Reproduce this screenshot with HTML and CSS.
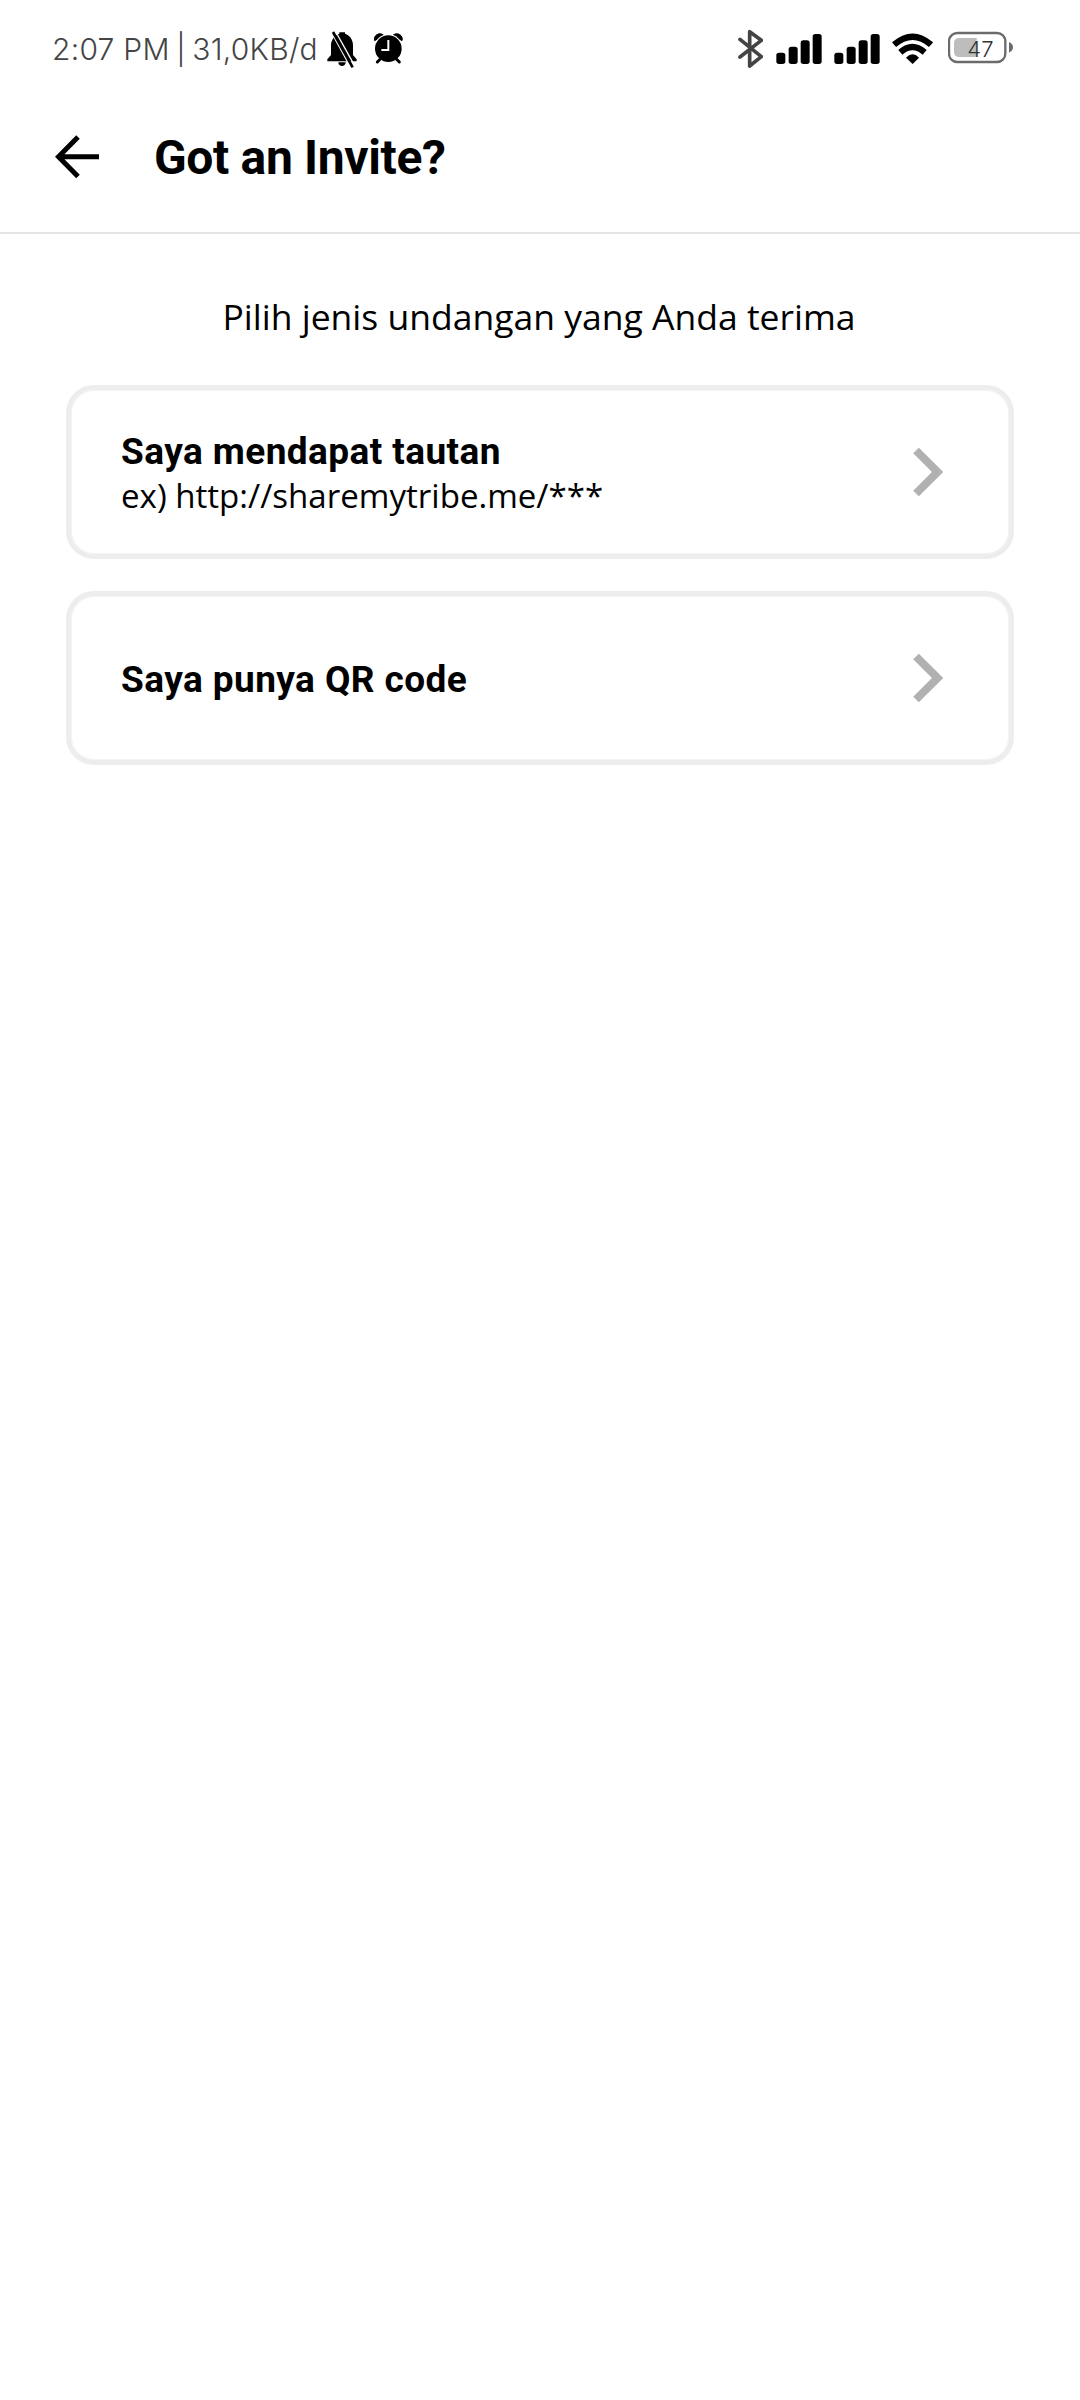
FILE: index.html
```html
<!DOCTYPE html>
<html lang="id">
<head>
<meta charset="utf-8">
<title>Got an Invite?</title>
<link rel="stylesheet" href="styles.css">
</head>
<body>
<div class="status-bar">
  <div class="status-left">
    <span class="status-text">2:07 PM<span class="separator"> | </span>31,0KB/d</span>
    <svg class="bell" viewBox="860 0 90 180">
      <path d="M861 124v-6l11-13V76c0-17 11-30 25-35v-4h17v4c15 5 24 18 24 35v29l11 13v6zM894 127h22c0 15-22 15-22 0z"/>
      <path d="M871 31l64 117" stroke="#fff" stroke-width="6"/>
      <path d="M878 36l59 106" stroke="#000" stroke-width="8"/>
      <path d="M885 33l59 106" stroke="#fff" stroke-width="4"/>
    </svg>
    <svg class="alarm" viewBox="1000 0 87 180">
      <path d="M1002 62c-5-15 14-28 27-16zM1084 62c5-15-14-28-27-16z" stroke="#000" stroke-width="3"/>
      <circle cx="1043" cy="86" r="43" fill="#fff"/>
      <circle cx="1043" cy="86" r="40"/>
      <path d="M1019 117l-9 9M1067 117l9 9" stroke="#000" stroke-width="9" stroke-linecap="round"/>
      <path d="M1043 60v30h-21" fill="none" stroke="#fff" stroke-width="6"/>
    </svg>
  </div>
  <div class="status-right">
    <svg class="bluetooth" viewBox="52 0 75 180">
      <path d="M58 58l64 52-35 28V35l35 26-64 50" fill="none" stroke="#444" stroke-width="11" stroke-linejoin="round" stroke-linecap="round"/>
    </svg>
    <svg class="signal" viewBox="168 0 138 180">
      <rect x="169" y="98" width="27" height="34" rx="8"/><rect x="206" y="80" width="27" height="52" rx="8"/><rect x="242" y="61" width="27" height="71" rx="8"/><rect x="278" y="42" width="27" height="90" rx="8"/>
    </svg>
    <svg class="signal" viewBox="168 0 138 180">
      <rect x="169" y="98" width="27" height="34" rx="8"/><rect x="206" y="80" width="27" height="52" rx="8"/><rect x="242" y="61" width="27" height="71" rx="8"/><rect x="278" y="42" width="27" height="90" rx="8"/>
    </svg>
    <svg class="wifi" viewBox="516 0 123 180">
      <path d="M522 74q56-48 111 0M541 97q36-32 73 0" fill="none" stroke="#000" stroke-width="19"/>
      <path d="M558 113q20-20 39 0l-19 19z"/>
    </svg>
    <svg class="battery" viewBox="684 0 198 180">
      <rect x="687" y="39" width="169" height="87" rx="25" fill="none" stroke="#6b6b6b" stroke-width="7"/>
      <path d="M718 54h52v57h-52q-16 0-16-16V70q0-16 16-16z" fill="#bdbdbd"/>
      <path d="M867 66q12 5 12 16t-12 16z" fill="#6b6b6b"/>
      <text class="battery-level" x="742" y="110">47</text>
    </svg>
  </div>
</div>
<header class="app-bar">
  <svg class="back" viewBox="0 0 44 44"><path d="M23 2L3.500 21.800L23 41.500M3 21.800H44" fill="none" stroke="#000" stroke-width="5"/></svg>
  <h1 class="title">Got an Invite?</h1>
</header>
<main class="content">
  <p class="prompt">Pilih jenis undangan yang Anda terima</p>
  <div class="card">
    <div class="card-text">
      <div class="card-title">Saya mendapat tautan</div>
      <div class="card-hint">ex) http://sharemytribe.me/***</div>
    </div>
    <svg class="chevron" viewBox="0 0 30 50"><path d="M3 3.500L24.500 25L3 46.500" fill="none" stroke="#b1b1b1" stroke-width="8"/></svg>
  </div>
  <div class="card">
    <div class="card-text">
      <div class="card-title">Saya punya QR code</div>
    </div>
    <svg class="chevron" viewBox="0 0 30 50"><path d="M3 3.500L24.500 25L3 46.500" fill="none" stroke="#b1b1b1" stroke-width="8"/></svg>
  </div>
</main>
</body>
</html>
```
FILE: styles.css
```css
* { box-sizing: border-box; }
body { margin: 0; background: #fff; color: #000; min-height: 2400px; }
svg { display: block; flex: none; }
.status-bar { display: flex; justify-content: space-between; height: 80px; padding: 20px 66px 0 52px; }
.status-left, .status-right { display: flex; height: 60px; }
.status-left svg, .status-right svg { height: 60px; }
.status-text { width: 275px; font: 300 30px/58px Inter, sans-serif; letter-spacing: 0.25px; color: #444; white-space: nowrap; }
.separator { margin: 0 -1.8px; letter-spacing: 0; }
.bell { width: 30px; }
.alarm { width: 29px; margin-left: 16.5px; }
.bluetooth { width: 25px; }
.signal { width: 46px; margin-left: 13px; }
.signal + .signal { margin-left: 12px; }
.wifi { width: 41px; margin-left: 12px; }
.battery { width: 66px; margin-left: 15px; }
.battery-level { font: 300 66px Inter, sans-serif; fill: #333; }
.app-bar { display: flex; height: 154px; padding: 55px 55px 0; border-bottom: 2px solid #e3e3e3; }
.back { width: 44px; height: 44px; }
.title { margin: -5px 0 0 55px; font: 700 48px/56px Roboto, sans-serif; letter-spacing: -0.35px; white-space: nowrap; }
.content { display: flex; flex-direction: column; padding: 57px 66px 0; }
.prompt { margin: 0 0 44px; padding-right: 2px; font: 400 35.5px/50px "Open Sans", sans-serif; text-align: center; }
.card { display: flex; align-items: center; justify-content: space-between; height: 174px; padding: 0 66px 0 50px; border: 5px solid #ededed; border-radius: 28px; box-shadow: inset 0 0 0 1px #f3f3f3; margin-bottom: 32px; }
.card-text { padding-top: 3px; }
.card-title { font: 700 37px/44px Roboto, sans-serif; letter-spacing: 0.42px; }
.card-hint { font: 400 33.1px/44px "Open Sans", sans-serif; }
.chevron { width: 30px; height: 50px; }
```
